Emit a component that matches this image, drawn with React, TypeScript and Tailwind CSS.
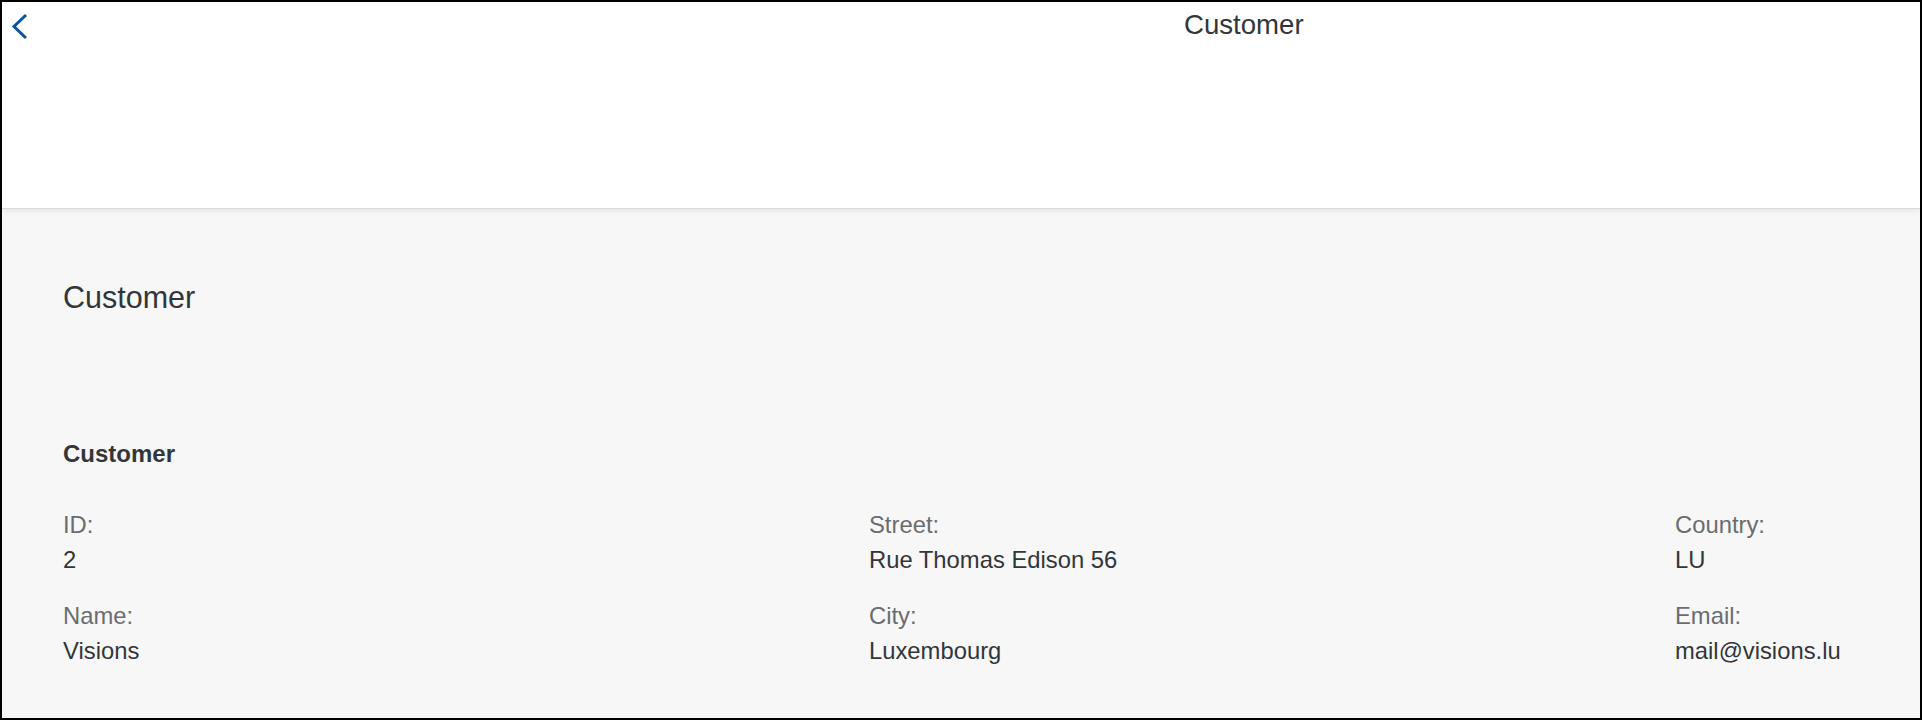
const fields = [
  [
    { label: "ID:", value: "2" },
    { label: "Name:", value: "Visions" },
  ],
  [
    { label: "Street:", value: "Rue Thomas Edison 56" },
    { label: "City:", value: "Luxembourg" },
  ],
  [
    { label: "Country:", value: "LU" },
    { label: "Email:", value: "mail@visions.lu" },
  ],
];

const BackIcon = () => (
  <svg width="18" height="27" viewBox="0 0 18 27" fill="none">
    <polyline
      points="15,2 3,13.5 15,25"
      stroke="#0854a0"
      strokeWidth="3"
      strokeLinejoin="miter"
    />
  </svg>
);

const App = () => {
  return (
    <div
      className="box-border flex h-[720px] w-[1922px] flex-col overflow-hidden border-2 border-black bg-[#f7f7f7] text-[#32363a]"
      style={{ fontFamily: '"Liberation Sans", Arial, sans-serif' }}
    >
      {/* header bar */}
      <header className="relative z-10 box-border h-[207px] shrink-0 border-b border-[#d9d9d9] bg-white shadow-[0_2px_6px_rgba(0,0,0,0.08)]">
        <div className="flex items-start">
          <button className="ml-[9px] mt-[11px] flex h-[27px] w-[18px] items-center">
            <BackIcon />
          </button>
          <h1 className="ml-[1155px] mt-[7px] text-[27.6px] font-normal leading-[32px]">
            Customer
          </h1>
        </div>
      </header>

      {/* object page content */}
      <main className="flex-1 pl-[61px] pt-[70px]">
        <h2 className="text-[30.5px] font-normal leading-[36px]">Customer</h2>

        <section className="mt-[124px]">
          <h3 className="text-[24px] font-bold leading-[30px]">Customer</h3>
          <div className="mt-[38px] grid grid-cols-[806px_806px_1fr]">
            {fields.map((col, i) => (
              <div key={i} className="flex flex-col gap-[21px]">
                {col.map((f) => (
                  <div key={f.label} className="text-[23.8px] leading-[35px]">
                    <div className="text-[#6a6d70]">{f.label}</div>
                    <div>{f.value}</div>
                  </div>
                ))}
              </div>
            ))}
          </div>
        </section>
      </main>
    </div>
  );
};

export default App;
